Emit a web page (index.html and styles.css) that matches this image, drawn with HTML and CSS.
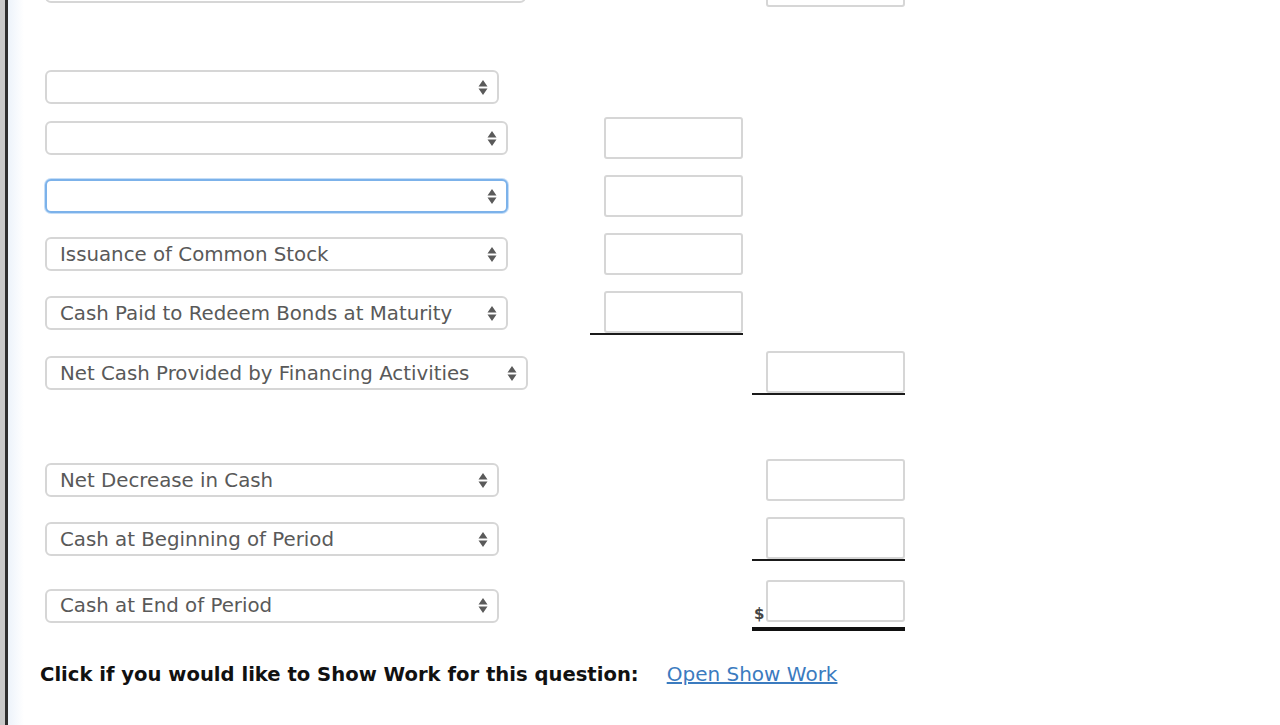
FILE: index.html
```html
<!DOCTYPE html>
<html>
<head>
<meta charset="utf-8">
<link rel="stylesheet" href="styles.css">
</head>
<body>
<div class="frame">
  <div class="content">
    <div class="row first">
      <div class="cell-a"><div class="select w480"><span class="val"></span><svg class="arr" viewBox="0 0 10 17"><path d="M5 1 L9.5 7.5 H0.5 Z M5 16 L9.5 9.5 H0.5 Z"/></svg></div></div>
      <div class="cell-b"></div>
      <div class="cell-c"><div class="amt"><span class="box"></span></div></div>
    </div>

    <div class="row short sect">
      <div class="cell-a"><div class="select w453"><span class="val"></span><svg class="arr" viewBox="0 0 10 17"><path d="M5 1 L9.5 7.5 H0.5 Z M5 16 L9.5 9.5 H0.5 Z"/></svg></div></div>
      <div class="cell-b"></div>
      <div class="cell-c"></div>
    </div>

    <div class="row">
      <div class="cell-a"><div class="select w462"><span class="val"></span><svg class="arr" viewBox="0 0 10 17"><path d="M5 1 L9.5 7.5 H0.5 Z M5 16 L9.5 9.5 H0.5 Z"/></svg></div></div>
      <div class="cell-b"><div class="amt"><span class="box"></span></div></div>
      <div class="cell-c"></div>
    </div>

    <div class="row">
      <div class="cell-a"><div class="select w462 focus"><span class="val"></span><svg class="arr" viewBox="0 0 10 17"><path d="M5 1 L9.5 7.5 H0.5 Z M5 16 L9.5 9.5 H0.5 Z"/></svg></div></div>
      <div class="cell-b"><div class="amt"><span class="box"></span></div></div>
      <div class="cell-c"></div>
    </div>

    <div class="row">
      <div class="cell-a"><div class="select w462"><span class="val">Issuance of Common Stock</span><svg class="arr" viewBox="0 0 10 17"><path d="M5 1 L9.5 7.5 H0.5 Z M5 16 L9.5 9.5 H0.5 Z"/></svg></div></div>
      <div class="cell-b"><div class="amt"><span class="box"></span></div></div>
      <div class="cell-c"></div>
    </div>

    <div class="row">
      <div class="cell-a"><div class="select w462"><span class="val">Cash Paid to Redeem Bonds at Maturity</span><svg class="arr" viewBox="0 0 10 17"><path d="M5 1 L9.5 7.5 H0.5 Z M5 16 L9.5 9.5 H0.5 Z"/></svg></div></div>
      <div class="cell-b"><div class="amt rule"><span class="box"></span></div></div>
      <div class="cell-c"></div>
    </div>

    <div class="row">
      <div class="cell-a"><div class="select w482"><span class="val">Net Cash Provided by Financing Activities</span><svg class="arr" viewBox="0 0 10 17"><path d="M5 1 L9.5 7.5 H0.5 Z M5 16 L9.5 9.5 H0.5 Z"/></svg></div></div>
      <div class="cell-b"></div>
      <div class="cell-c"><div class="amt rule"><span class="box"></span></div></div>
    </div>

    <div class="row sect2">
      <div class="cell-a"><div class="select w453"><span class="val">Net Decrease in Cash</span><svg class="arr" viewBox="0 0 10 17"><path d="M5 1 L9.5 7.5 H0.5 Z M5 16 L9.5 9.5 H0.5 Z"/></svg></div></div>
      <div class="cell-b"></div>
      <div class="cell-c"><div class="amt"><span class="box"></span></div></div>
    </div>

    <div class="row">
      <div class="cell-a"><div class="select w453"><span class="val">Cash at Beginning of Period</span><svg class="arr" viewBox="0 0 10 17"><path d="M5 1 L9.5 7.5 H0.5 Z M5 16 L9.5 9.5 H0.5 Z"/></svg></div></div>
      <div class="cell-b"></div>
      <div class="cell-c"><div class="amt rule"><span class="box"></span></div></div>
    </div>

    <div class="row last">
      <div class="cell-a"><div class="select w453"><span class="val">Cash at End of Period</span><svg class="arr" viewBox="0 0 10 17"><path d="M5 1 L9.5 7.5 H0.5 Z M5 16 L9.5 9.5 H0.5 Z"/></svg></div></div>
      <div class="cell-b"></div>
      <div class="cell-c"><div class="amt total"><span class="dollar">$</span><span class="box"></span></div></div>
    </div>

    <p class="showwork">Click if you would like to Show Work for this question:<a class="link" href="#">Open Show Work</a></p>
  </div>
</div>
</body>
</html>
```

FILE: styles.css
```css
html, body {
  margin: 0;
  padding: 0;
  background: #ffffff;
  height: 100%;
  overflow: hidden;
}

.frame {
  border-left: 5px solid #c9c9c9;
  min-height: 725px;
  box-sizing: border-box;
}

.content {
  border-left: 3px solid #2e2e2e;
  min-height: 725px;
  box-sizing: border-box;
  padding-left: 37px;
  background: linear-gradient(to right, #edf3fa 0px, #f6f9fd 8px, #ffffff 16px);
  font-family: "DejaVu Sans", Verdana, sans-serif;
  overflow: hidden;
}

.row {
  display: grid;
  grid-template-columns: 545px 162px 153px;
  align-items: center;
  min-height: 42px;
  margin-bottom: 16px;
}

.row.first {
  margin-top: -35px;
}

.row.short {
  min-height: 34px;
  margin-bottom: 13px;
}

.row.sect {
  margin-top: 63px;
}

.row.sect2 {
  margin-top: 64px;
}

.row.last {
  margin-top: 19px;
}

.cell-a,
.cell-b,
.cell-c {
  display: flex;
  align-items: center;
}

.select {
  height: 34px;
  box-sizing: border-box;
  border: 2px solid #d6d6d6;
  border-radius: 6px;
  background: #ffffff;
  display: flex;
  align-items: center;
  padding-left: 13px;
  padding-right: 9px;
  color: #595959;
  font-size: 19.8px;
  white-space: nowrap;
}

.select.focus {
  border-color: #7cb2ea;
  box-shadow: 0 0 0 1px #c4ddf7;
}

.w453 { width: 454px; }
.w462 { width: 463px; }
.w480 { width: 481px; }
.w482 { width: 483px; }

.val {
  flex: 1;
  overflow: hidden;
}

.arr {
  width: 10px;
  height: 17px;
  fill: #5a5a5a;
  flex: none;
}

.amt {
  width: 153px;
  display: flex;
  justify-content: flex-end;
  align-items: flex-end;
}

.amt.rule {
  border-bottom: 2px solid #1a1a1a;
}

.amt.total {
  justify-content: space-between;
  padding-bottom: 5px;
  border-bottom: 4px solid #111111;
}

.box {
  display: block;
  width: 139px;
  height: 42px;
  box-sizing: border-box;
  border: 2px solid #d6d6d6;
  border-radius: 3px;
  background: #ffffff;
}

.dollar {
  font-size: 15px;
  font-weight: bold;
  color: #444444;
  line-height: 15px;
  margin-left: 2px;
  margin-bottom: 0px;
}

.showwork {
  margin: 31px 0 0 -5px;
  font-size: 19.6px;
  font-weight: bold;
  color: #111111;
  line-height: 24px;
  white-space: nowrap;
}

.link {
  font-weight: normal;
  font-size: 20px;
  color: #3b7bbf;
  text-decoration: underline;
  margin-left: 28px;
}
```
